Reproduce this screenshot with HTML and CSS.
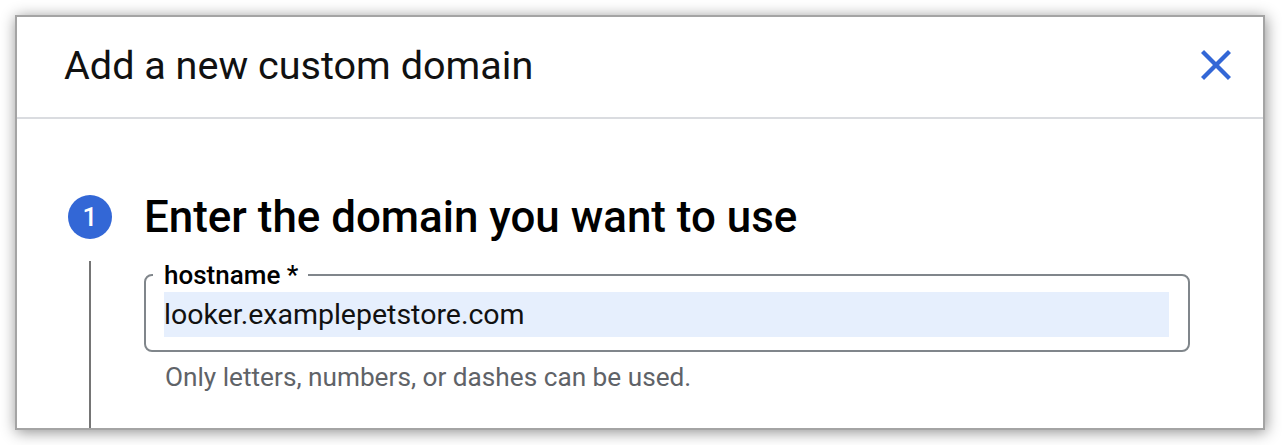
FILE: index.html
```html
<!DOCTYPE html>
<html>
  <head>
    <title>Add a new custom domain</title>
    <link rel="stylesheet" href="styles.css">
  </head>
  <body>
    <div class="dialog">
      <div class="dialog-header">
        <h2 class="dialog-title">Add a new custom domain</h2>
        <button class="close-button" aria-label="Close">
          <svg width="30" height="30" viewBox="5 5 14 14">
            <path d="M19 6.41L17.59 5 12 10.59 6.41 5 5 6.41 10.59 12 5 17.59 6.41 19 12 13.41 17.59 19 19 17.59 13.41 12z" fill="#3367d6"/>
          </svg>
        </button>
      </div>
      <div class="dialog-body">
        <div class="step">
          <div class="step-number">1</div>
          <h3 class="step-title">Enter the domain you want to use</h3>
          <div class="step-line"></div>
          <div class="step-content">
            <fieldset class="field">
              <legend>hostname *</legend>
              <input type="text" value="looker.examplepetstore.com" />
            </fieldset>
            <p class="hint">Only letters, numbers, or dashes can be used.</p>
          </div>
        </div>
      </div>
    </div>
  </body>
</html>
```

FILE: styles.css
```css
/* reset */
* {
  box-sizing: border-box;
  margin: 0;
  padding: 0;
}

body {
  padding: 15px;
  background-color: #fff;
  font-family: Roboto, "Liberation Sans", sans-serif;
  color: #111;
}

/* dialog frame */
.dialog {
  width: 1250px;
  height: 415px;
  overflow: hidden;
  background-color: #fff;
  border: 2px solid #a4a4a4;
  box-shadow: 1px 2px 14px rgba(0, 0, 0, 0.45);
}

.dialog-header {
  display: flex;
  align-items: center;
  justify-content: space-between;
  height: 102px;
  padding: 0 32px 4px 47px;
  border-bottom: 2px solid #dadce0;
}

.dialog-title {
  font-size: 39.6px;
  font-weight: 400;
}

.close-button {
  display: flex;
  border: none;
  background: none;
  cursor: pointer;
}

/* step */
.dialog-body {
  padding: 76px 0 0 51px;
}

.step {
  display: grid;
  grid-template-columns: 44px 1fr;
  column-gap: 32px;
  align-items: center;
}

.step-number {
  width: 44px;
  height: 44px;
  border-radius: 50%;
  background-color: #3367d6;
  color: #fff;
  font-size: 26px;
  font-weight: 500;
  display: flex;
  align-items: center;
  justify-content: center;
}

.step-title {
  font-size: 43.9px;
  font-weight: 500;
  line-height: 44px;
  color: #000;
}

.step-line {
  align-self: stretch;
  justify-self: center;
  width: 2px;
  margin-top: 22px;
  height: 200px;
  background-color: #757575;
}

.step-content {
  align-self: start;
  padding-top: 22px;
  width: 1046px;
}

/* outlined text field */
.field {
  border: 2px solid #80868b;
  border-radius: 8px;
  padding: 0 19px 13px 18px;
}

.field legend {
  margin-left: -11px;
  padding: 0 10px 0 11px;
  font-size: 26px;
  font-weight: 500;
  line-height: 28px;
  color: #000;
}

.field input {
  display: block;
  width: 100%;
  height: 45px;
  margin-top: 3px;
  border: none;
  outline: none;
  background-color: #e6effd;
  font-family: Roboto, "Liberation Sans", sans-serif;
  font-size: 28.5px;
  color: #111;
}

.hint {
  margin: 10px 0 0 21px;
  font-size: 26.2px;
  color: #5f6368;
}
```
